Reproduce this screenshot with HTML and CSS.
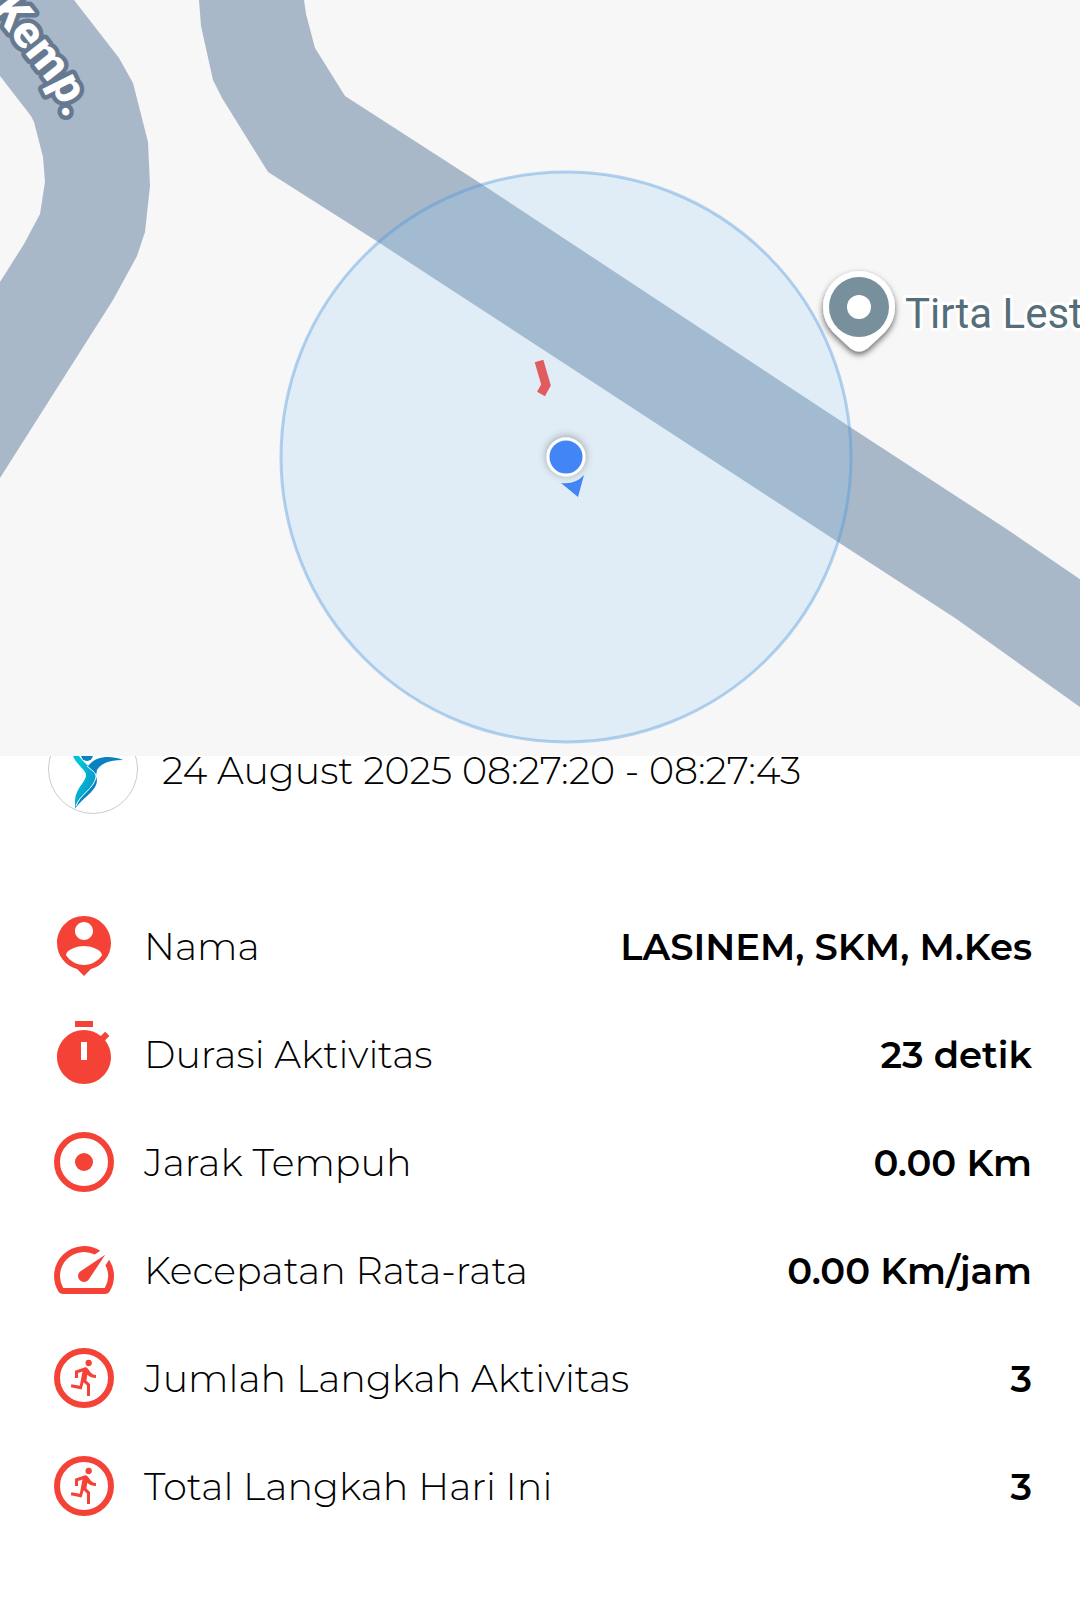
FILE: index.html
```html
<!DOCTYPE html>
<html lang="id">
<head>
<meta charset="utf-8">
<meta name="viewport" content="width=device-width, initial-scale=1">
<title>Detail Aktivitas</title>
<link rel="stylesheet" href="styles.css">
</head>
<body>
<main class="activity">
  <svg class="map" viewBox="0 0 1080 756" role="img" aria-label="Peta lokasi aktivitas">
    <defs>
      <filter id="shadow" x="-30%" y="-30%" width="160%" height="160%">
        <feDropShadow dx="0" dy="3" stdDeviation="3" flood-color="#000" flood-opacity="0.6"/>
      </filter>
      <filter id="glow" x="-50%" y="-50%" width="200%" height="200%">
        <feDropShadow dx="0" dy="-1" stdDeviation="4" flood-color="#000" flood-opacity="0.35"/>
      </filter>
      <path id="street" d="M-9 10L47 81Q58 95 64 118L69 138"/>
    </defs>
    <rect class="map-ground" width="1080" height="756"/>
    <path class="map-road" d="M-20 -90L74 0L119 58L133 83L148 142L150 186L145 232L137 256L113 300L0 478L-20 500V310L0 282L24 244L40 214L45 182L43 157L34 122L31 116L0 76L-20 50Z"/>
    <path class="map-road" d="M199 -10V0L201 26L213 80L222 98L268 172L378 242L838 542L955 618L1090 714V586L1005 528L850 427L483 185L345 96L315 48L306 14L304 0V-10Z"/>
    <circle class="map-accuracy" cx="566" cy="457" r="285"/>
    <path class="map-track" d="M539 361L546 385L541 394"/>
    <path class="map-heading" d="M561 483Q575 485 584 475L578 497Z"/>
    <circle class="map-me" cx="566" cy="457" r="18" filter="url(#glow)"/>
    <path class="map-pin" filter="url(#shadow)" d="M833 332A36 36 0 1 1 885 332L868 348Q859 355 850 348Z"/>
    <circle class="map-pin-fill" cx="859" cy="307" r="30"/>
    <circle class="map-pin-dot" cx="859" cy="307" r="12"/>
    <text class="map-place" x="905" y="328">Tirta Lest</text>
    <text class="map-street"><textPath href="#street">Kemp.</textPath></text>
  </svg>

  <header class="session">
    <svg class="session-avatar" viewBox="0 0 90 90" aria-hidden="true">
      <defs>
        <linearGradient id="body-left" x1="0" y1="0" x2="1" y2="1">
          <stop offset="0.3" stop-color="#00c4d6"/>
          <stop offset="1" stop-color="#0b86c4"/>
        </linearGradient>
      </defs>
      <circle cx="45" cy="45" r="44.5" fill="#fff" stroke="#ccc"/>
      <circle cx="39" cy="31" r="6" fill="#0a82c2"/>
      <path d="M23 26C25 37 33 42 37 48C42 55 28 62 27 76L27 84C32 75 46 65 48 51C44 43 32 38 28 26Z" fill="url(#body-left)"/>
      <path d="M40 42C46 34 59 30 75 36C62 36 53 39 49 46L48 52C53 65 36 72 27 85C30 74 48 64 47 50Z" fill="#0a82c2"/>
      <path d="M39 42C43 46 48 48 48 53C46 65 31 71 28 82" fill="none" stroke="#fff"/>
    </svg>
    <h1 class="session-time">24 August 2025 08:27:20 - 08:27:43</h1>
  </header>

  <dl class="stats">
    <div class="stat">
      <svg class="stat-icon" viewBox="0 0 24 24" aria-hidden="true"><path d="M12 2C7.03 2 3 6.03 3 11c0 4.17 2.84 7.67 6.69 8.69L12 22l2.31-2.31C18.16 18.67 21 15.17 21 11c0-4.97-4.03-9-9-9zm0 2c1.66 0 3 1.34 3 3s-1.34 3-3 3-3-1.34-3-3 1.34-3 3-3zm0 14.3c-2.5 0-4.71-1.28-6-3.22.03-1.99 4-3.08 6-3.08 1.99 0 5.97 1.09 6 3.08-1.29 1.94-3.5 3.22-6 3.22z"/></svg>
      <dt class="stat-label">Nama</dt>
      <dd class="stat-value">LASINEM, SKM, M.Kes</dd>
    </div>
    <div class="stat">
      <svg class="stat-icon" viewBox="0 0 24 24" aria-hidden="true"><path fill-rule="evenodd" d="M15 1H9v2h6V1zm-4 13h2V8h-2v6zm8.03-6.61l1.42-1.42c-.43-.51-.9-.99-1.41-1.41l-1.42 1.42C16.07 4.74 14.12 4 12 4c-4.97 0-9 4.03-9 9s4.02 9 9 9 9-4.03 9-9c0-2.12-.74-4.07-1.97-5.61z"/></svg>
      <dt class="stat-label">Durasi Aktivitas</dt>
      <dd class="stat-value">23 detik</dd>
    </div>
    <div class="stat">
      <svg class="stat-icon" viewBox="0 0 24 24" aria-hidden="true"><circle class="stat-ring" cx="12" cy="12" r="9"/><circle cx="12" cy="12" r="3"/></svg>
      <dt class="stat-label">Jarak Tempuh</dt>
      <dd class="stat-value">0.00 Km</dd>
    </div>
    <div class="stat">
      <svg class="stat-icon" viewBox="0 0 24 24" aria-hidden="true"><path d="M20.38 8.57l-1.23 1.85a8 8 0 0 1-.22 7.58H5.07A8 8 0 0 1 15.58 6.85l1.85-1.23A10 10 0 0 0 3.35 19a2 2 0 0 0 1.72 1h13.85a2 2 0 0 0 1.74-1 10 10 0 0 0-.27-10.44zM10.59 15.41a2 2 0 0 0 2.83 0l5.66-8.49-8.49 5.66a2 2 0 0 0 0 2.83z"/></svg>
      <dt class="stat-label">Kecepatan Rata-rata</dt>
      <dd class="stat-value">0.00 Km/jam</dd>
    </div>
    <div class="stat">
      <svg class="stat-icon" viewBox="0 0 24 24" aria-hidden="true"><circle class="stat-ring" cx="12" cy="12" r="9"/><circle cx="13.55" cy="7" r="1.05"/><path d="M16 12v-1c-1 0-1.7-.6-2.2-1.4l-.5-.7c-.2-.3-.5-.5-.9-.5L9 9.6V12h1v-1.7l1.5-.5-.9 4.8-2.8-.5-.2 1 3.6.7.7-2.4 1.1 1.1V18h1v-4l-1.2-1.2.3-1.9c.8.8 1.7 1.1 2.9 1.1z"/></svg>
      <dt class="stat-label">Jumlah Langkah Aktivitas</dt>
      <dd class="stat-value">3</dd>
    </div>
    <div class="stat">
      <svg class="stat-icon" viewBox="0 0 24 24" aria-hidden="true"><circle class="stat-ring" cx="12" cy="12" r="9"/><circle cx="13.55" cy="7" r="1.05"/><path d="M16 12v-1c-1 0-1.7-.6-2.2-1.4l-.5-.7c-.2-.3-.5-.5-.9-.5L9 9.6V12h1v-1.7l1.5-.5-.9 4.8-2.8-.5-.2 1 3.6.7.7-2.4 1.1 1.1V18h1v-4l-1.2-1.2.3-1.9c.8.8 1.7 1.1 2.9 1.1z"/></svg>
      <dt class="stat-label">Total Langkah Hari Ini</dt>
      <dd class="stat-value">3</dd>
    </div>
  </dl>
</main>
</body>
</html>
```
FILE: styles.css
```css
* {
  box-sizing: border-box;
}

body {
  margin: 0;
  background: #fff;
  color: #000;
  font-family: Montserrat, Inter, "Liberation Sans", sans-serif;
  font-size: 38px;
  line-height: 50px;
}

.activity {
  display: flex;
  flex-direction: column;
}

.map {
  display: block;
  width: 100%;
  height: auto;
  z-index: 1;
}

.map-ground {
  fill: #f7f7f7;
}

.map-road {
  fill: #a9b8c9;
}

.map-accuracy {
  fill: rgba(140, 202, 244, 0.2);
  stroke: rgba(74, 150, 222, 0.4);
  stroke-width: 3;
}

.map-track {
  fill: none;
  stroke: #e15d5d;
  stroke-width: 9;
}

.map-heading {
  fill: #4285f4;
}

.map-me {
  fill: #4285f4;
  stroke: #fff;
  stroke-width: 3;
}

.map-pin,
.map-pin-dot {
  fill: #fff;
}

.map-pin-fill {
  fill: #78909c;
}

.map-place,
.map-street {
  font-family: Roboto, sans-serif;
  paint-order: stroke;
  stroke-linejoin: round;
}

.map-place {
  fill: #546e7a;
  font-size: 42px;
  stroke: #fff;
  stroke-width: 6;
}

.map-street {
  fill: #fff;
  font-size: 46px;
  font-weight: 800;
  stroke: #667990;
  stroke-width: 9;
}

/* The header slides under the lower edge of the map. */
.session {
  display: flex;
  align-items: center;
  gap: 24px;
  margin-top: -32px;
  padding: 0 48px;
}

.session-avatar {
  flex: none;
  width: 90px;
  height: 90px;
}

.session-time {
  margin: 0;
  padding-top: 4px;
  font-size: 38px;
  font-weight: 300;
}

.stats {
  display: flex;
  flex-direction: column;
  gap: 36px;
  margin: 0;
  padding: 96px 48px 84px;
}

.stat {
  display: flex;
  align-items: center;
  gap: 24px;
}

.stat-icon {
  flex: none;
  width: 72px;
  height: 72px;
  fill: #f44336;
}

.stat-ring {
  fill: none;
  stroke: #f44336;
  stroke-width: 2;
}

.stat-label,
.stat-value {
  padding-top: 2px;
}

.stat-label {
  flex: 1;
  font-weight: 300;
}

.stat-value {
  margin: 0;
  font-size: 37px;
  font-weight: 600;
  text-align: right;
}
```
